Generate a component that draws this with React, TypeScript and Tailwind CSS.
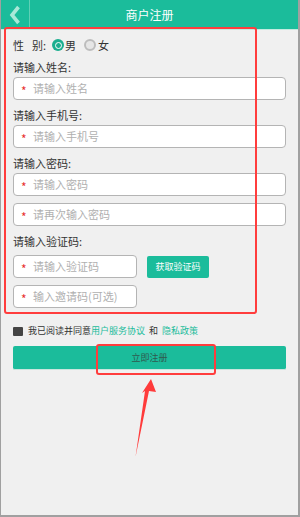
import React from 'react';

const font = { fontFamily: '"Noto Sans CJK SC", "Noto Sans", sans-serif' };

const Field: React.FC<{ placeholder: string; className?: string }> = ({ placeholder, className = 'w-[273px]' }) => (
  <div className={`${className} h-[23px] bg-white border border-[#b4b4b4] rounded-[4px] flex items-center pl-[7px]`}>
    <span className="text-[#e8322f] text-[12px] leading-none w-[11px] pt-[4px]">*</span>
    <span className="text-[11px] text-[#b0b0b0] ml-[1px]">{placeholder}</span>
  </div>
);

const Label: React.FC<{ children: React.ReactNode; first?: boolean }> = ({ children, first }) => (
  <div className={`h-[18px] flex items-center text-[11px] text-[#333] pb-[2px] ${first ? 'mt-[6px]' : 'mt-[7px]'}`}>
    {children}
  </div>
);

const App: React.FC = () => {
  return (
    <div
      style={font}
      className="relative w-[300px] h-[517px] overflow-hidden bg-[#f0f0f0] border-l border-r-2 border-b-2 border-[#a0a0a0]"
    >
      {/* Header */}
      <div className="h-[30px] bg-[#1bbc9b] border-b border-[#c3ebe0] flex items-center relative">
        <div className="w-[29px] h-full flex items-center justify-center border-r border-[#5fd0b6]">
          <svg width="14" height="20" viewBox="0 0 14 20">
            <polyline points="10.5,2 4,10 10.5,18" fill="none" stroke="#a9e8d8" strokeWidth="3.6" strokeLinejoin="miter" />
          </svg>
        </div>
        <div className="flex-1 text-center text-white text-[12px] pr-[29px]">商户注册</div>
      </div>

      {/* Form */}
      <div className="pl-[12px]">
        <div className="mt-[7px] h-[16px] flex items-center text-[11px] text-[#333]">
          <span>性</span>
          <span className="ml-[8px]">别:</span>
          <span className="ml-[6px] w-[12px] h-[12px] rounded-full bg-[#1bae8f] flex items-center justify-center">
            <span className="w-[7px] h-[7px] rounded-full bg-[#1bae8f] border-[1.5px] border-white" />
          </span>
          <span className="ml-[1px]">男</span>
          <span className="ml-[8px] w-[12px] h-[12px] rounded-full border-2 border-[#bdbdbd] bg-[#e6e6e6]" />
          <span className="ml-[2px]">女</span>
        </div>

        <Label first>请输入姓名:</Label>
        <Field placeholder="请输入姓名" />

        <Label>请输入手机号:</Label>
        <Field placeholder="请输入手机号" />

        <Label>请输入密码:</Label>
        <Field placeholder="请输入密码" />
        <div className="mt-[7px]">
          <Field placeholder="请再次输入密码" />
        </div>

        <Label>请输入验证码:</Label>
        <div className="mt-[4px] flex items-center">
          <Field placeholder="请输入验证码" className="w-[124px]" />
          <button className="ml-[10px] w-[62px] h-[22px] bg-[#1bbc9b] rounded-[2px] text-white text-[9px]">获取验证码</button>
        </div>
        <div className="mt-[7px]">
          <Field placeholder="输入邀请码(可选)" className="w-[124px]" />
        </div>

        <div className="mt-[17px] h-[12px] flex items-center text-[9px] text-[#333]">
          <span className="w-[10px] h-[9px] bg-[#444] rounded-[1px]" />
          <span className="ml-[5px]">我已阅读并同意</span>
          <span className="text-[#1bbc9b]">用户服务协议</span>
          <span className="mx-[4px]">和</span>
          <span className="text-[#1bbc9b]">隐私政策</span>
        </div>

        <button className="mt-[9px] w-[273px] h-[24px] bg-[#1bbc9b] rounded-[2px] text-[9px] text-[#2f5a4f] border-b border-[#c9e6de]">
          立即注册
        </button>
      </div>

      {/* Annotations */}
      <div className="absolute left-[3px] top-[27px] w-[253px] h-[287px] border-2 border-[#ff3d3d] rounded-[3px]" />
      <div className="absolute left-[95px] top-[344px] w-[120px] h-[31px] border-2 border-[#ff3d3d] rounded-[3px]" />
      <svg className="absolute left-0 top-0" width="300" height="517" viewBox="0 0 300 517">
        <polygon points="150,379 155,392 148,391 134.5,457 144,391 141,393" fill="#ff3b3b" />
      </svg>
    </div>
  );
};

export default App;
